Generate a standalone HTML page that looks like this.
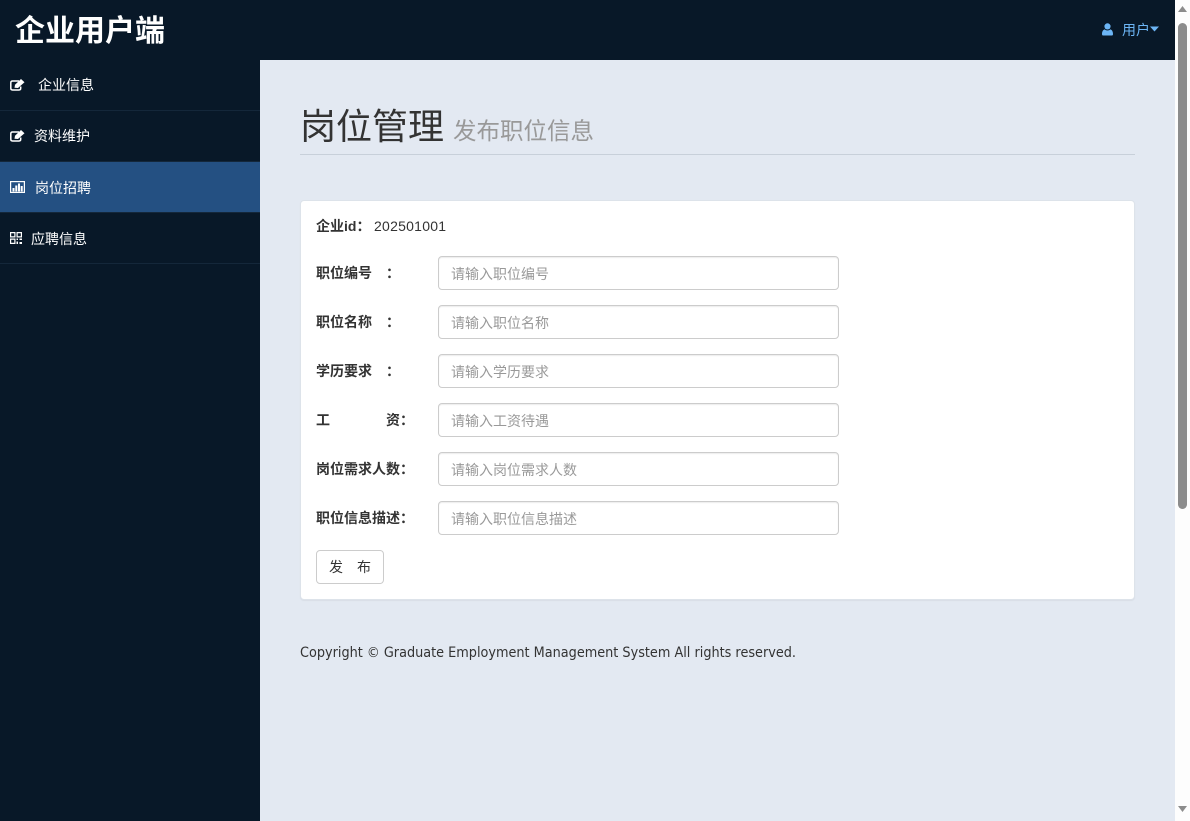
<!DOCTYPE html>
<html lang="zh-CN">
<head>
<meta charset="utf-8">
<title>岗位管理</title>
<style>
*{box-sizing:border-box}
html,body{margin:0;padding:0;width:1190px;height:821px;overflow:hidden;background:#e3e9f2;font-family:"Liberation Sans","Noto Sans CJK SC",sans-serif;font-size:14px;color:#333}
#top{position:absolute;left:0;top:0;width:1175px;height:60px;background:#081828}
#brand{position:absolute;left:15px;top:11px;font-size:30px;line-height:42px;font-weight:bold;color:#fff;white-space:nowrap}
#user{position:absolute;left:1122px;top:21px;line-height:18px;color:#6cb5f5;font-size:14px;white-space:nowrap}
#side{position:absolute;left:0;top:60px;width:260px;height:761px;background:#081828}
.nav{position:absolute;left:0;width:260px;height:51px;border-bottom:1px solid #14273a;color:#fff;line-height:50px;font-size:14px}
.nav.on{background:#245082;border-bottom:1px solid #14273a;border-top:1px solid #14273a}
.nav span{position:absolute;top:0;white-space:nowrap}
.nav svg{position:absolute;left:10px}
#h1{position:absolute;left:300px;top:101px;font-size:36px;line-height:52px;color:#333;white-space:nowrap}
#h1 small{font-size:23.5px;color:#999;margin-left:9px}
#rule{position:absolute;left:300px;top:154px;width:835px;height:1px;background:#c8d0da}
#card{position:absolute;left:300px;top:200px;width:835px;height:400px;background:#fff;border:1px solid #dde3ea;border-radius:4px;box-shadow:0 1px 1px rgba(0,0,0,.05)}
.lb{position:absolute;left:316px;font-weight:bold;color:#333;line-height:20px;white-space:nowrap}
.lb i{position:absolute;top:0;font-style:normal}
.inp{position:absolute;left:438px;width:401px;height:34px;border:1px solid #ccc;border-radius:4px;background:#fff;color:#999;line-height:34px;padding-left:12px;white-space:nowrap;box-shadow:inset 0 1px 1px rgba(0,0,0,.075)}
#btn{position:absolute;left:316px;top:550px;width:68px;height:34px;border:1px solid #ccc;border-radius:4px;background:#fff;line-height:33px;color:#333}
#btn i{position:absolute;top:0;font-style:normal}
#copy{position:absolute;left:300px;top:643px;line-height:20px;font-family:"DejaVu Sans",sans-serif;font-size:14px;color:#333;white-space:nowrap;transform-origin:0 50%;transform:scaleX(.918)}
#sb{position:absolute;left:1175px;top:0;width:15px;height:821px;background:#fdfdfd}
#sb b{position:absolute;left:3px;top:23px;width:9px;height:486px;background:#8c8c8c;border-radius:5px}
#sb svg{position:absolute;left:3px}
</style>
</head>
<body>
<div id="top">
  <div id="brand">企业用户端</div>
  <svg style="position:absolute;left:1102px;top:23px" width="11" height="13" viewBox="0 0 11 13"><circle cx="5.5" cy="3.4" r="3.1" fill="#6cb5f5"/><path d="M0 11.2C0 8.4 1.2 6.6 2.8 6.4 3.5 7.1 4.4 7.5 5.5 7.5S7.5 7.1 8.2 6.4C9.8 6.6 11 8.4 11 11.2 11 12.3 10.2 12.5 9.4 12.5H1.6C.8 12.5 0 12.3 0 11.2Z" fill="#6cb5f5"/></svg>
  <div id="user">用户</div>
  <svg style="position:absolute;left:1150px;top:26px" width="9" height="6" viewBox="0 0 9 6"><path d="M0 .5H9L4.5 5.500Z" fill="#6cb5f5"/></svg>
</div>

<div id="side"></div>
<div class="nav" style="top:60px">
  <svg style="top:19px" width="15" height="12" viewBox="0 0 15 12"><path d="M9 2H2.500C1.500 2 .8 2.700 .8 3.700V9.300C.8 10.300 1.500 11 2.500 11H9C10 11 10.700 10.300 10.700 9.300V7.500" fill="none" stroke="#fff" stroke-width="1.500"/><path d="M4.500 8.800L5 5.700 11 0 14.500 3.300 8 9Z" fill="#fff"/></svg>
  <span style="left:38px">企业信息</span>
</div>
<div class="nav" style="top:111px">
  <svg style="top:19px" width="15" height="12" viewBox="0 0 15 12"><path d="M9 2H2.500C1.500 2 .8 2.700 .8 3.700V9.300C.8 10.300 1.500 11 2.500 11H9C10 11 10.700 10.300 10.700 9.300V7.500" fill="none" stroke="#fff" stroke-width="1.500"/><path d="M4.500 8.800L5 5.700 11 0 14.500 3.300 8 9Z" fill="#fff"/></svg>
  <span style="left:34px">资料维护</span>
</div>
<div class="nav on" style="top:161px;height:52px">
  <svg style="top:19px" width="15" height="12" viewBox="0 0 15 12"><rect x=".6" y=".6" width="13.800" height="10.800" fill="none" stroke="#fff" stroke-width="1.200"/><path d="M2.500 7h2v3.500h-2zM5.300 4.500h2v6h-2zM8 2.500h2v8H8zM10.700 5h2v5.500h-2z" fill="#fff"/></svg>
  <span style="left:35px;top:1px">岗位招聘</span>
</div>
<div class="nav" style="top:213px">
  <svg style="top:19px" width="12" height="12" viewBox="0 0 12 12"><path d="M.6.600h4.300v4.300H.6zM7.100.600h4.300v4.300H7.100zM.6 7.100h4.300v4.300H.6z" fill="none" stroke="#fff" stroke-width="1.200"/><path d="M6.500 6.500H8V8H6.500zM9.500 6.500H12V8H9.500zM6.500 9.500H8V12H6.500zM9.500 10H12v2H9.500z" fill="#fff"/></svg>
  <span style="left:31px;top:1px">应聘信息</span>
</div>

<div id="h1">岗位管理<small>发布职位信息</small></div>
<div id="rule"></div>
<div id="card"></div>

<div class="lb" style="top:216px">企业id：</div>
<div style="position:absolute;left:374px;top:216px;line-height:20px;color:#333;letter-spacing:.25px">202501001</div>

<div class="lb" style="top:263px">职位编号<i style="left:70px">：</i></div>
<div class="inp" style="top:256px">请输入职位编号</div>
<div class="lb" style="top:312px">职位名称<i style="left:70px">：</i></div>
<div class="inp" style="top:305px">请输入职位名称</div>
<div class="lb" style="top:361px">学历要求<i style="left:70px">：</i></div>
<div class="inp" style="top:354px">请输入学历要求</div>
<div class="lb" style="top:410px"><i style="left:0">工</i><i style="left:70px">资：</i></div>
<div class="inp" style="top:403px">请输入工资待遇</div>
<div class="lb" style="top:459px">岗位需求人数：</div>
<div class="inp" style="top:452px">请输入岗位需求人数</div>
<div class="lb" style="top:508px">职位信息描述：</div>
<div class="inp" style="top:501px">请输入职位信息描述</div>

<div id="btn"><i style="left:12px">发</i><i style="left:40px">布</i></div>

<div id="copy">Copyright © Graduate Employment Management System All rights reserved.</div>

<div id="sb">
  <svg style="top:6px" width="9" height="6" viewBox="0 0 9 6"><path d="M4.500 0L9 6H0Z" fill="#8c8c8c"/></svg>
  <b></b>
  <svg style="top:806px" width="9" height="6" viewBox="0 0 9 6"><path d="M0 0H9L4.500 6Z" fill="#8c8c8c"/></svg>
</div>
</body>
</html>
